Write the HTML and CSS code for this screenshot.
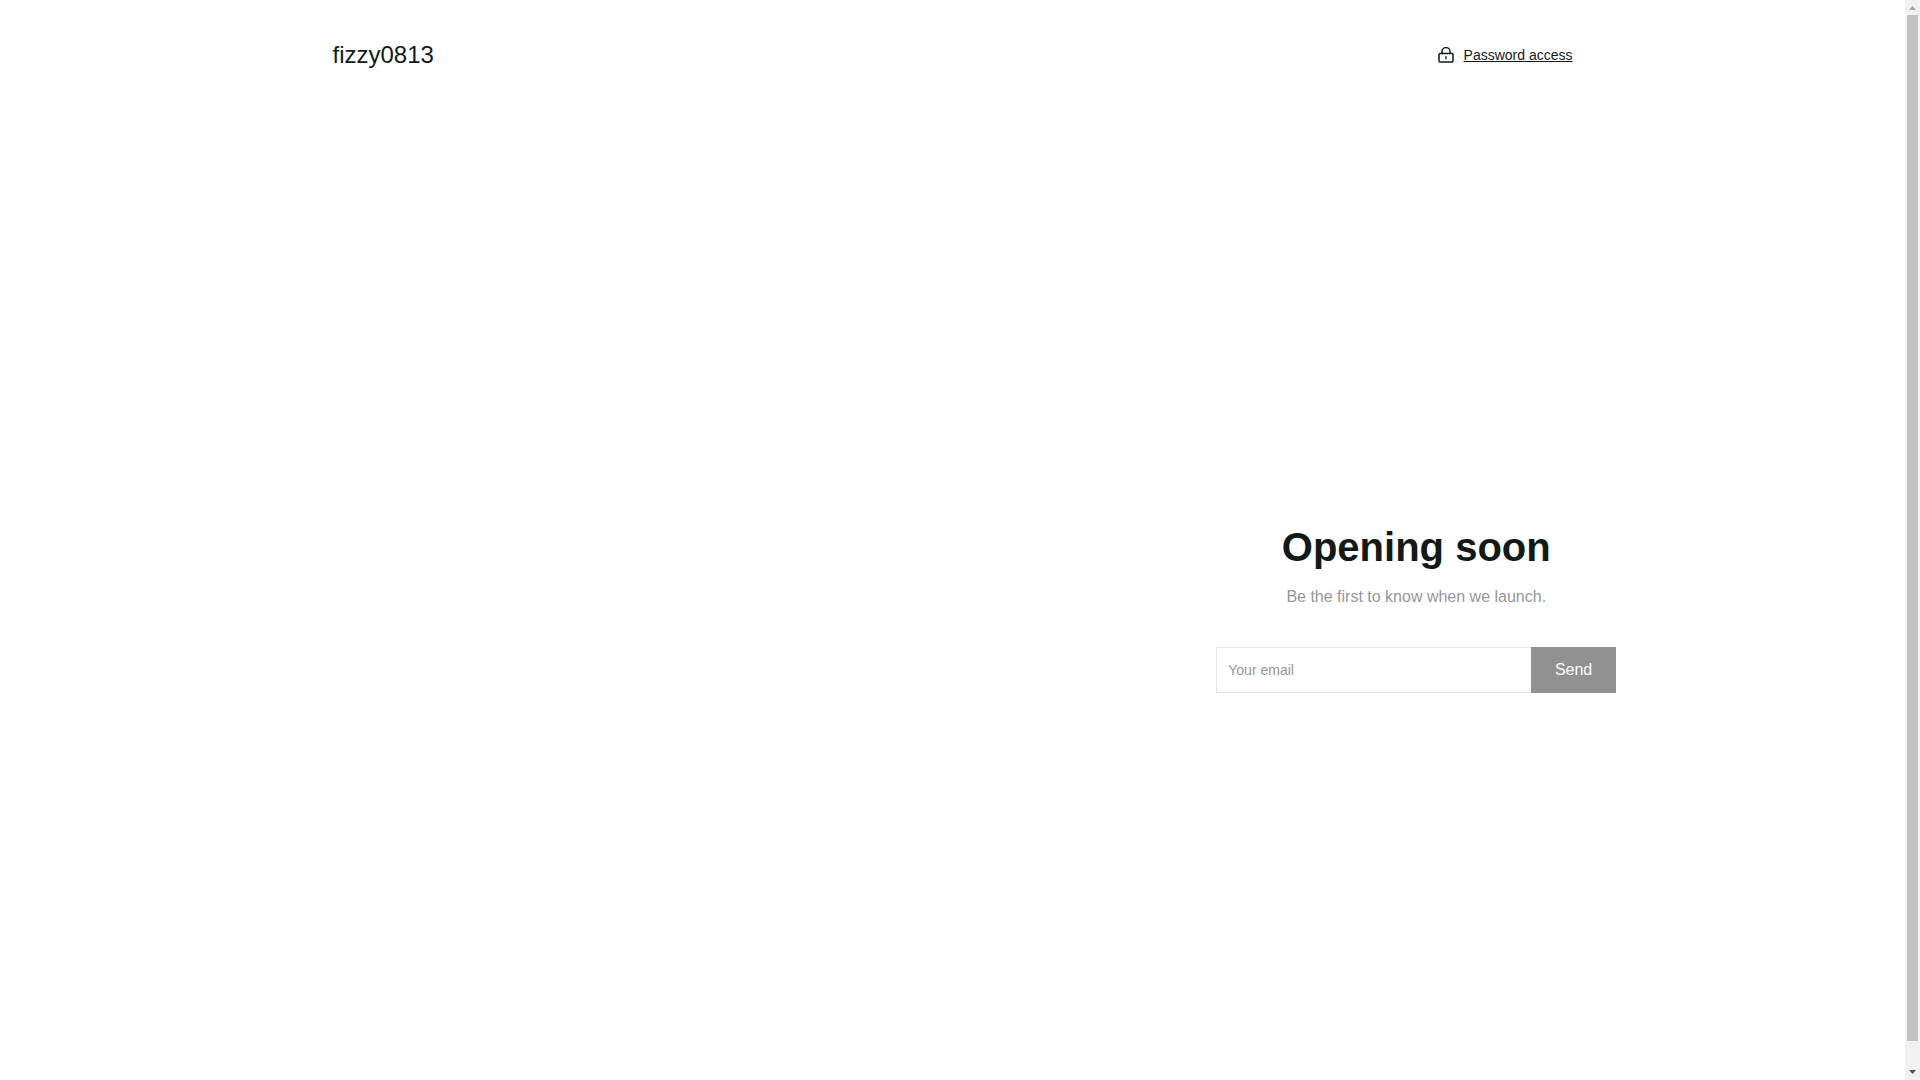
FILE: index.html
```
<!DOCTYPE html>
<html lang="en">
<head>
<meta charset="utf-8">
<meta name="viewport" content="width=device-width, initial-scale=1">
<title>fizzy0813</title>
<link rel="stylesheet" href="styles.css">
</head>

<body>
<div class="page">
  <header class="header">
    <h1 class="logo">fizzy0813</h1>
    <a class="password-link" href="#">
      <svg class="icon-lock" viewBox="0 0 16 16" fill="none" stroke="currentColor" aria-hidden="true">
        <rect x="1" y="6.5" width="14" height="8.6" rx="1" stroke-width="1.5"/>
        <path d="M4 6.5V4.6a4 4 0 0 1 8 0v1.9" stroke-width="1.5"/>
        <path d="M8 9.2v3.4" stroke-width="1.3"/>
      </svg>
      <span class="password-text">Password access</span>
    </a>
  </header>

  <main class="main">
    <section class="signup">
      <h2 class="title">Opening soon</h2>
      <p class="subtitle">Be the first to know when we launch.</p>
      <form class="form">
        <input class="email" type="email" placeholder="Your email" aria-label="Your email">
        <button class="send" type="submit">Send</button>
      </form>
    </section>
  </main>
</div>

<div class="scrollbar" aria-hidden="true">
  <svg class="arrow arrow-up" viewBox="0 0 15 15"><path d="M4 10h7L7.5 6z"/></svg>
  <div class="thumb"></div>
  <svg class="arrow arrow-down" viewBox="0 0 15 15"><path d="M4 5h7L7.5 9z"/></svg>
</div>
</body>
</html>
```
FILE: styles.css
```
* {
  box-sizing: border-box;
}

body {
  display: flex;
  height: 100vh;
  margin: 0;
  overflow: hidden;
  background: #fff;
  color: #121a18;
  font-family: "Liberation Sans", Arial, sans-serif;
  font-size: 16px;
  line-height: 24px;
}

.page {
  flex: 1;
}

.header {
  display: flex;
  align-items: center;
  justify-content: space-between;
  max-width: 1240px;
  height: 110px;
  margin: 0 auto;
}

.logo {
  margin: 0;
  font-size: 24px;
  font-weight: normal;
}

.password-link {
  display: flex;
  align-items: center;
  gap: 10px;
  color: inherit;
  font-size: 14px;
  text-decoration: none;
}

.password-text {
  text-decoration: underline;
  text-underline-offset: 1px;
}

.icon-lock {
  width: 16px;
  height: 16px;
}

/* runs a little below the fold */
.main {
  display: grid;
  grid-template-columns: 1fr 1fr;
  align-items: center;
  height: calc(100vh - 84px);
}

.signup {
  grid-column: 2;
  padding-right: 25px;
  text-align: center;
}

.title {
  margin: 0 0 14px;
  font-size: 40px;
  line-height: 48px;
}

.subtitle {
  margin: 0 0 38px;
  color: #969696;
}

.form {
  display: flex;
  max-width: 400px;
  height: 46px;
  margin: 0 auto;
}

.email {
  flex: 1;
  min-width: 0;
  padding: 0 11px;
  border: 1px solid #e5e5e5;
  border-right: 0;
  border-radius: 0;
  background: #fff;
  color: inherit;
  font: inherit;
  font-size: 14px;
}

.email::placeholder {
  color: #969696;
}

.send {
  padding: 0 24px;
  border: 0;
  background: #919191;
  color: #fff;
  font: inherit;
}

.scrollbar {
  display: flex;
  flex-direction: column;
  width: 15px;
  background: #f1f1f1;
}

.arrow {
  width: 15px;
  height: 15px;
}

.arrow-up {
  fill: #a3a3a3;
}

.arrow-down {
  margin-top: auto;
  fill: #505050;
}

.thumb {
  height: 95%;
  margin: 0 2px;
  background: #c1c1c1;
}
```
